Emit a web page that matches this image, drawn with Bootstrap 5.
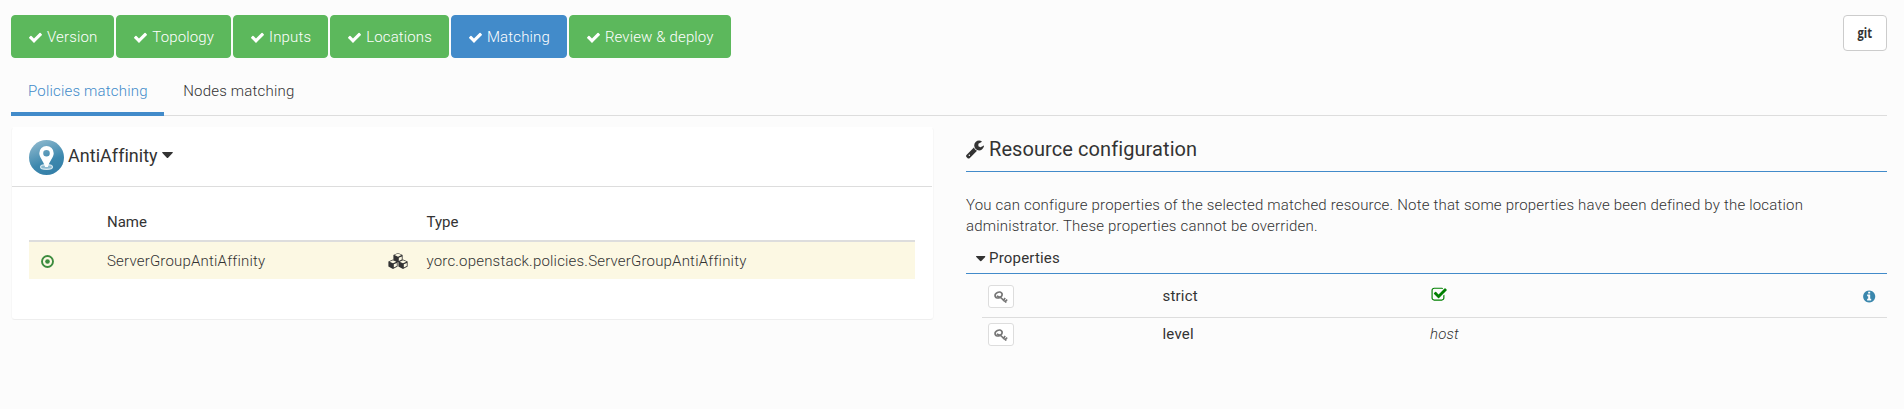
<!DOCTYPE html>
<html lang="en">
<head>
<meta charset="utf-8">
<title>Matching</title>
<link rel="stylesheet" href="https://cdn.jsdelivr.net/npm/bootstrap@5.3.0/dist/css/bootstrap.min.css">
<style>
body{font-family:Roboto,sans-serif;font-size:15px;font-weight:300;line-height:21px;letter-spacing:.19px;color:#333;background:#fcfcfc;padding:15px 17px 0 11px;overflow:hidden}
svg{display:block;flex:none}
.steps{gap:2px}
.steps .btn{height:43px;padding:1px 16px 0;font-size:15px;font-weight:300;letter-spacing:.14px;border-radius:4px;border:1px solid #5cb85c;background:#5cb85c;color:#fff;display:flex;align-items:center;gap:4px}
.steps .btn.current{background:#428bca;border-color:#428bca}
.btn-git{width:44px;height:36px;padding:0 0 2px;border:1px solid #ccc;border-radius:4px;background:#fff;color:#333;font:700 15px/1 "Open Sans",sans-serif;letter-spacing:0}
.btn-git span{display:inline-block;transform:scaleX(.74);margin:0 -4px}
.nav-tabs{height:58px;padding-top:12px;border-bottom:1px solid #ddd;gap:2px}
.nav-tabs .nav-link{height:46px;margin:0;padding:11px 16.500px 0 17px;border:0;border-bottom:4px solid transparent;border-radius:0;color:#333;background:none}
.nav-tabs .nav-link.active{color:#428bca;background:none;border-bottom-color:#428bca}
.panes{padding-top:11px;gap:32px}
.match-card{width:923px;height:193px;border:1px solid #f7f7f7;border-top-color:#fff;border-bottom-color:#eee;border-radius:4px;background:#fff}
.match-head{height:59px;margin-right:1px;padding:12px 17px 11px;border-bottom:1px solid #ddd;font-size:18px;font-weight:400;letter-spacing:.03px}
.match-title{padding-top:5px}
.match-list{margin:17px 18px 0 17px}
.match-list th,.match-list td{padding:9px 8px 7px;height:37px}
.match-list th{font-weight:400;border-bottom:2px solid #ddd;padding:8px 8px 7px;height:36px;letter-spacing:0}
.match-list td{background:#fcf8e3}
.config{width:921px}
.config h3{height:45px;margin:0;font-size:20px;font-weight:400;letter-spacing:.08px;border-bottom:1px solid #428bca;gap:5px}
.config p{margin:23px 0 0;width:870px}
.props-head{height:27px;margin-top:10px;padding:0 0 3px 10px;border-bottom:1px solid #428bca;font-weight:400;gap:3px}
.prop{margin-left:16px;font-weight:400}
.prop-first{height:44px;border-bottom:1px solid #ddd;padding-top:3px}
.prop-next{height:33px}
.key{width:26px;height:23px;margin-left:6px;padding:0;border:1px solid #ddd;border-radius:3px;background:#fff}
.key svg{margin:auto}
.prop-name{width:267.500px;margin-left:148.500px}
.prop-first .prop-name{padding-top:9px}
.tick{margin-top:10px}
.info{margin-top:13px}
</style>
</head>
<body>
<svg class="d-none" xmlns="http://www.w3.org/2000/svg">
<symbol id="check" viewBox="0 0 1792 1792"><path d="M1671 566q0 40-28 68l-724 724-136 136q-28 28-68 28t-68-28l-136-136-362-362q-28-28-28-68t28-68l136-136q28-28 68-28t68 28l294 295 656-657q28-28 68-28t68 28l136 136q28 28 28 68z"/></symbol>
<symbol id="caret" viewBox="0 0 10 6"><path d="M.6 0h8.800q1 .2.3 1L5.600 5.200q-.6.600-1.200 0L.3 1Q-.4.200.6 0z"/></symbol>
<symbol id="key" viewBox="0 0 14 12"><g fill="none" stroke="#777"><ellipse cx="4.600" cy="4" rx="3.600" ry="2.800" transform="rotate(-25 4.600 4)" stroke-width="1.800"/><path d="M2.800 5L6.500 6.400 12.300 11.500M9 10l2.200-3M11.200 11l1.900-2.400" stroke-width="1.600"/></g></symbol>
</svg>
<header class="d-flex justify-content-between align-items-start">
<div class="d-flex steps">
<button class="btn"><svg width="15" height="15" fill="currentColor"><use href="#check"/></svg>Version</button>
<button class="btn"><svg width="15" height="15" fill="currentColor"><use href="#check"/></svg>Topology</button>
<button class="btn"><svg width="15" height="15" fill="currentColor"><use href="#check"/></svg>Inputs</button>
<button class="btn"><svg width="15" height="15" fill="currentColor"><use href="#check"/></svg>Locations</button>
<button class="btn current"><svg width="15" height="15" fill="currentColor"><use href="#check"/></svg>Matching</button>
<button class="btn"><svg width="15" height="15" fill="currentColor"><use href="#check"/></svg>Review &amp; deploy</button>
</div>
<button class="btn btn-git"><span>git</span></button>
</header>
<nav class="nav nav-tabs"><a class="nav-link active" href="#">Policies matching</a><a class="nav-link" href="#">Nodes matching</a></nav>
<main class="d-flex panes">
<section class="match-card">
<div class="match-head d-flex">
<svg width="35" height="35" viewBox="0 0 35 35"><defs><linearGradient id="disc" x1=".2" y1="0" x2=".6" y2="1"><stop offset="0" stop-color="#8fb9ce"/><stop offset=".65" stop-color="#3d88ae"/><stop offset="1" stop-color="#347fa8"/></linearGradient></defs><circle cx="17.500" cy="17.500" r="17.500" fill="url(#disc)"/><ellipse cx="17.500" cy="27" rx="6" ry="2.300" fill="#8dbad0" stroke="#d5e7ef" stroke-width="1.200"/><path fill="#fff" fill-rule="evenodd" d="M17.500 6a7.200 7.200 0 0 1 7.200 7.200c0 4.300-4 7.300-5.800 13.800h-2.800c-1.800-6.500-5.800-9.500-5.800-13.800A7.200 7.200 0 0 1 17.500 6zm0 3.900a3.300 3.300 0 1 0 0 6.600 3.300 3.300 0 0 0 0-6.600z"/></svg>
<span class="match-title ms-1 me-1">AntiAffinity</span><svg class="mt-2 pt-1" width="11" height="11" fill="#333"><use href="#caret" width="11" height="6.500"/></svg>
</div>
<div class="match-list"><table class="w-100" style="table-layout:fixed">
<colgroup><col style="width:70px"><col style="width:280px"><col style="width:39.500px"><col></colgroup>
<tr><th></th><th>Name</th><th></th><th>Type</th></tr>
<tr><td><svg class="ms-1" width="13" height="13" viewBox="0 0 13 13"><circle cx="6.500" cy="6.500" r="5.500" fill="none" stroke="#3c8c3e" stroke-width="1.900"/><circle cx="6.500" cy="6.500" r="2.300" fill="#3c8c3e"/></svg></td><td>ServerGroupAntiAffinity</td>
<td><svg style="margin:-2px 0 0 1px" width="20" height="16" viewBox="0 0 20 16"><g id="cube"><path d="M5 6.600l4.600 2v5L5 16 .4 13.600v-5z" fill="#333"/><path d="M5 7.200L8.500 8.700 5 10.300 1.500 8.700zM5.800 11.300L8.800 10v3L5.800 14.600z" fill="#fcf8e3"/></g><use href="#cube" x="10"/><use href="#cube" x="5" y="-6.600"/></svg></td><td>yorc.openstack.policies.ServerGroupAntiAffinity</td></tr>
</table></div>
</section>
<section class="config">
<h3 class="d-flex align-items-center"><svg width="18" height="20" viewBox="80 0 1650 1792" fill="#333"><path d="M448 1472q0-26-19-45t-45-19-45 19-19 45 19 45 45 19 45-19 19-45zm644-420l-682 682q-37 37-90 37-52 0-91-37l-106-108q-38-36-38-90 0-53 38-91l681-681q39 98 114.500 173.500t173.500 114.500zm634-435q0 39-23 106-47 134-164.500 217.500t-258.500 83.500q-185 0-316.500-131.500t-131.500-316.500 131.500-316.500 316.500-131.500q58 0 121.500 16.500t107.500 46.500q16 11 16 28t-16 28l-293 169v224l193 107q5-3 79-48.500t135.500-81 70.500-35.500q15 0 23.500 10t8.500 25z"/></svg><span>Resource configuration</span></h3>
<p>You can configure properties of the selected matched resource. Note that some properties have been defined by the location administrator. These properties cannot be overriden.</p>
<div class="props-head d-flex align-items-center"><svg width="10" height="6" fill="#333"><use href="#caret" width="9.500" height="5.700"/></svg><span>Properties</span></div>
<div class="prop prop-first d-flex"><button class="btn key mt-2 pt-0"><svg width="14" height="12"><use href="#key"/></svg></button><span class="prop-name">strict</span><svg class="tick" width="18" height="18" viewBox="0 0 18 18"><g transform="translate(.9 -.5) scale(.0092)" fill="#008000"><path d="M1472 930v318q0 119-84.500 203.500t-203.500 84.500h-832q-119 0-203.500-84.500t-84.500-203.500v-832q0-119 84.500-203.500t203.500-84.500h832q63 0 117 25 15 7 18 23 3 17-9 29l-49 49q-10 10-23 10-3 0-9-2-23-6-45-6h-832q-66 0-113 47t-47 113v832q0 66 47 113t113 47h832q66 0 113-47t47-113v-254q0-13 9-22l64-64q10-10 23-10 6 0 12 3 20 8 20 29zm231-489l-814 814q-24 24-57 24t-57-24l-430-430q-24-24-24-57t24-57l110-110q24-24 57-24t57 24l263 263 647-647q24-24 57-24t57 24l110 110q24 24 24 57t-24 57z"/></g></svg>
<svg class="ms-auto me-2 info" width="16" height="13" viewBox="0 0 16 13"><path transform="translate(-.9 -.55) scale(.0079)" fill="#3a87ad" d="M1152 1376v-160q0-14-9-23t-23-9h-96v-512q0-14-9-23t-23-9h-320q-14 0-23 9t-9 23v160q0 14 9 23t23 9h96v320h-96q-14 0-23 9t-9 23v160q0 14 9 23t23 9h448q14 0 23-9t9-23zm-128-896v-160q0-14-9-23t-23-9h-192q-14 0-23 9t-9 23v160q0 14 9 23t23 9h192q14 0 23-9t9-23zm640 416q0 209-103 385.500t-279.500 279.500-385.500 103-385.500-103-279.500-279.500-103-385.500 103-385.500 279.500-279.500 385.500-103 385.500 103 279.500 279.500 103 385.500z"/></svg></div>
<div class="prop prop-next d-flex align-items-center"><button class="btn key"><svg width="14" height="12"><use href="#key"/></svg></button><span class="prop-name">level</span><em class="fw-light">host</em></div>
</section>
</main>
<script src="https://cdn.jsdelivr.net/npm/bootstrap@5.3.0/dist/js/bootstrap.bundle.min.js"></script>
</body>
</html>
